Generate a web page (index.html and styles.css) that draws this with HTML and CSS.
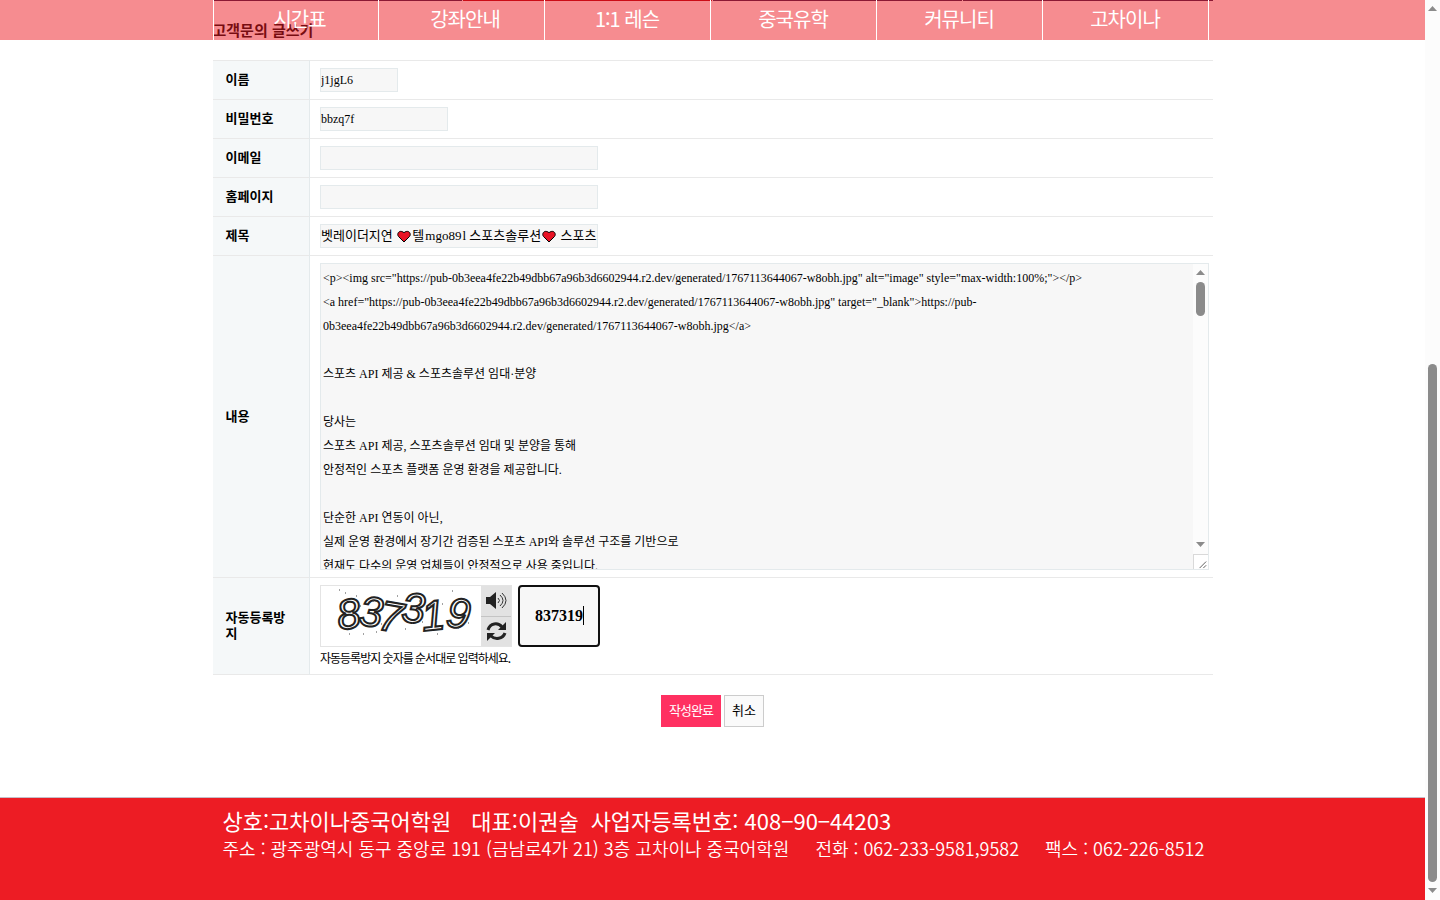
FILE: index.html
```html
<!DOCTYPE html>
<html lang="ko">
<head>
  <meta charset="UTF-8">
  <meta name="viewport" content="width=device-width, initial-scale=1.0">
  <title>고객문의 글쓰기</title>
  <link rel="stylesheet" href="styles.css">
</head>
<body>
  <div class="page">
    <header class="header">
      <nav class="gnb">
        <a href="#">시간표</a>
        <a href="#">강좌안내</a>
        <a href="#">1:1 레슨</a>
        <a href="#">중국유학</a>
        <a href="#">커뮤니티</a>
        <a href="#">고차이나</a>
      </nav>
    </header>

    <main class="container">
      <div class="tabs">
        <span></span><span class="on"></span><span></span><span></span>
      </div>
      <h1 class="title">고객문의 글쓰기</h1>

      <form class="write-form">
        <table class="form-table">
          <tbody>
            <tr>
              <th scope="row"><label for="name">이름</label></th>
              <td><input class="input w-small" type="text" id="name" value="j1jgL6"></td>
            </tr>
            <tr>
              <th scope="row"><label for="password">비밀번호</label></th>
              <td><input class="input w-medium" type="text" id="password" value="bbzq7f"></td>
            </tr>
            <tr>
              <th scope="row"><label for="email">이메일</label></th>
              <td><input class="input w-large" type="text" id="email"></td>
            </tr>
            <tr>
              <th scope="row"><label for="homepage">홈페이지</label></th>
              <td><input class="input w-large" type="text" id="homepage"></td>
            </tr>
            <tr>
              <th scope="row"><label for="subject">제목</label></th>
              <td>
                <div class="subject">
                  <input class="input w-large" type="text" id="subject" value="벳레이더지연 &emsp; 텔&hairsp;mgo89&hairsp;l 스포츠솔루션&emsp;  스포츠">
                  <svg class="heart heart-first" viewBox="0 0 14 13"><path d="M7 12 1.500 6.500C-.8 3.600 2.600-.9 7 2.700c4.400-3.600 7.800.9 5.500 3.800z"/></svg>
                  <svg class="heart heart-second" viewBox="0 0 14 13"><path d="M7 12 1.500 6.500C-.8 3.600 2.600-.9 7 2.700c4.400-3.600 7.800.9 5.500 3.800z"/></svg>
                </div>
              </td>
            </tr>
            <tr>
              <th scope="row"><label for="content">내용</label></th>
              <td>
                <div class="editor">
                  <textarea id="content">&lt;p&gt;&lt;img src="https://pub-0b3eea4fe22b49dbb67a96b3d6602944.r2.dev/generated/1767113644067-w8obh.jpg" alt="image" style="max-width:100%;"&gt;&lt;/p&gt;
&lt;a href="https://pub-0b3eea4fe22b49dbb67a96b3d6602944.r2.dev/generated/1767113644067-w8obh.jpg" target="_blank"&gt;https://pub-0b3eea4fe22b49dbb67a96b3d6602944.r2.dev/generated/1767113644067-w8obh.jpg&lt;/a&gt;

스포츠 API 제공 &amp; 스포츠솔루션 임대·분양

당사는
스포츠 API 제공, 스포츠솔루션 임대 및 분양을 통해
안정적인 스포츠 플랫폼 운영 환경을 제공합니다.

단순한 API 연동이 아닌,
실제 운영 환경에서 장기간 검증된 스포츠 API와 솔루션 구조를 기반으로
현재도 다수의 운영 업체들이 안정적으로 사용 중입니다.</textarea>
                  <div class="scrollbar">
                    <svg class="arrow" viewBox="0 0 9 5"><path d="M4.500 0 9 5H0z"/></svg>
                    <div class="track"><div class="thumb thumb-editor"></div></div>
                    <svg class="arrow" viewBox="0 0 9 5"><path d="M0 0h9L4.500 5z"/></svg>
                    <svg class="grip" viewBox="0 0 15 15"><path d="M6 14l7-7M10 14l3-3"/></svg>
                  </div>
                </div>
              </td>
            </tr>
            <tr>
              <th scope="row"><label for="captcha">자동등록방지</label></th>
              <td>
                <div class="captcha">
                  <div class="captcha-box">
                    <svg class="captcha-img" viewBox="0 0 160 60">
                      <g class="digits">
                        <text x="18" y="44" rotate="-8">8</text>
                        <text x="37" y="39" rotate="6">3</text>
                        <text x="56" y="43" rotate="10">7</text>
                        <text x="80" y="36" rotate="3">3</text>
                        <text x="102" y="45" rotate="-6">1</text>
                        <text x="124" y="40" rotate="8">9</text>
                      </g>
                      <path class="noise" d="M18 4h1M24 7h1M28 48h1M35 10h1M39 20h1M42 48h1M52 15h1M55 46h1M60 38h1M65 17h1M71 34h1M76 10h1M84 43h1M91 37h1M98 15h1M101 36h1M109 19h1M116 48h1M121 18h1M127 35h1M131 5h1M137 42h1M143 13h1M147 37h1"/>
                    </svg>
                    <div class="captcha-tools">
                      <button type="button" aria-label="숫자음성듣기">
                        <svg viewBox="0 0 22 20"><path class="fill" d="M1 6h4l6-5v17l-6-5H1z"/><path class="line" d="M13 7q3 2.500 0 5M15 4q6 5.500 0 11M17 2q8 7.500 0 15"/></svg>
                      </button>
                      <button type="button" aria-label="새로고침">
                        <svg viewBox="0 0 22 20"><path class="arc" d="M3 9C5 2 13 1 17 6M20 12c-2 6-10 7-14 3"/><path class="fill" d="M21 1v8h-8zM2 20v-8h8z"/></svg>
                      </button>
                    </div>
                  </div>
                  <input class="captcha-input" type="text" id="captcha" value="837319">
                  <span class="caret"></span>
                </div>
                <p class="captcha-info">자동등록방지 숫자를 순서대로 입력하세요.</p>
              </td>
            </tr>
          </tbody>
        </table>

        <div class="buttons">
          <button type="submit" class="btn btn-submit">작성완료</button>
          <button type="button" class="btn btn-cancel">취소</button>
        </div>
      </form>
    </main>

    <footer class="footer">
      <div class="container footer-inner">
        <p class="company"><span>상호:고차이나중국어학원</span><span class="owner">대표:이권술</span><span>사업자등록번호: 408−90−44203</span></p>
        <p class="address"><span>주소 : 광주광역시 동구 중앙로 191 (금남로4가 21) 3층 고차이나 중국어학원</span><span>전화 : 062-233-9581,9582</span><span>팩스 : 062-226-8512</span></p>
      </div>
    </footer>
  </div>

  <div class="scrollbar scrollbar-page">
    <svg class="arrow" viewBox="0 0 9 5"><path d="M4.500 0 9 5H0z"/></svg>
    <div class="track track-page"><div class="thumb thumb-page"></div></div>
    <svg class="arrow" viewBox="0 0 9 5"><path d="M0 0h9L4.500 5z"/></svg>
  </div>
</body>
</html>
```
FILE: styles.css
```css
* {
  margin: 0;
  padding: 0;
  box-sizing: border-box;
}

body {
  display: flex;
  height: 100vh;
  overflow: hidden;
  background: #fff;
  color: #000;
  font-family: "Liberation Serif", "Noto Sans CJK KR", serif;
  font-size: 12px;
}

.page {
  position: relative;
  flex: 1;
  display: flex;
  flex-direction: column;
}

.container {
  width: 100%;
  max-width: 1000px;
  margin: 0 auto;
}

/* header */
.header {
  position: absolute;
  top: 0;
  left: 0;
  right: 0;
  z-index: 10;
  height: 40px;
  background: rgba(238, 26, 34, 0.5);
}

.gnb {
  display: flex;
  width: 100%;
  max-width: 1000px;
  height: 40px;
  margin: 0 auto;
}

.gnb a {
  width: 166px;
  border-right: 1px solid #fff;
  color: #fff;
  font-family: "Noto Sans CJK KR", sans-serif;
  font-size: 20px;
  line-height: 38px;
  letter-spacing: -1px;
  text-align: center;
  text-decoration: none;
}

.gnb a:first-child {
  border-left: 1px solid #fff;
}

/* the first two menus sit right of centre */
.gnb a:nth-child(-n+2) {
  padding-left: 8px;
}

.tabs {
  display: flex;
  gap: 1px;
  height: 1px;
}

.tabs span {
  flex: 1;
  background: #291846;
}

.tabs .on {
  background: #a8000c;
}

.title {
  height: 59px;
  padding-top: 19px;
  font-family: "Noto Sans CJK KR", sans-serif;
  font-size: 15px;
  font-weight: bold;
  line-height: 20px;
}

/* form */
.form-table {
  width: 100%;
  border-collapse: collapse;
  table-layout: fixed;
}

.form-table tr {
  border-top: 1px solid #e9e9e9;
  border-bottom: 1px solid #e9e9e9;
}

.form-table th {
  width: 97px;
  padding: 6px 13px 8px;
  border-right: 1px solid #e4eaec;
  background: #f5f8f9;
  font-family: "Noto Sans CJK KR", sans-serif;
  font-size: 13px;
  line-height: 16px;
  text-align: left;
  word-break: break-all;
}

.form-table td {
  padding: 7px 4px 7px 10px;
}

.input {
  display: block;
  height: 24px;
  border: 1px solid #e4eaec;
  background: #f7f7f7;
  color: #000;
  font-family: inherit;
  font-size: 12px;
}

.w-small {
  width: 78px;
}

.w-medium {
  width: 128px;
}

.w-large {
  width: 278px;
}

.subject {
  position: relative;
}

.subject .input {
  padding-bottom: 3px;
  font-size: 13px;
}

.heart {
  position: absolute;
  top: 6px;
  width: 14px;
  height: 13px;
  fill: #e81224;
  stroke: #000;
}

.heart-first {
  left: 77px;
}

.heart-second {
  left: 222px;
}

.editor {
  display: flex;
  height: 307px;
  border: 1px solid #e4eaec;
  background: #f7f7f7;
}

.editor textarea {
  flex: 1;
  padding: 2px;
  border: 0;
  outline: 0;
  background: #f7f7f7;
  color: #000;
  font-family: inherit;
  font-size: 12px;
  line-height: 24px;
  overflow: hidden;
  resize: none;
}

/* scrollbars */
.scrollbar {
  display: flex;
  flex-direction: column;
  align-items: center;
  width: 15px;
  padding-top: 6px;
  background: #fcfcfc;
}

.arrow {
  width: 9px;
  height: 5px;
  fill: #8b8b8b;
}

.track {
  flex: 1;
  padding-top: 7px;
}

.thumb {
  width: 9px;
  border-radius: 5px;
  background: #8b8b8b;
}

.thumb-editor {
  height: 34px;
}

.grip {
  width: 15px;
  height: 15px;
  margin-top: 7px;
  border-top: 1px solid #d9d9d9;
  border-left: 1px solid #d9d9d9;
  background: #fff;
  fill: none;
  stroke: #555;
}

.scrollbar-page {
  padding-bottom: 7px;
}

.track-page {
  display: flex;
  align-items: flex-end;
  padding-bottom: 6px;
}

.thumb-page {
  height: 60%;
}

/* captcha */
.captcha {
  position: relative;
  display: flex;
  gap: 6px;
}

.captcha-box {
  display: flex;
  width: 192px;
  height: 62px;
  border: 1px solid #e4e4e4;
}

.captcha-img {
  width: 160px;
  height: 60px;
}

.digits {
  fill: #fff;
  stroke: #222;
  stroke-width: 2;
  font-family: "Liberation Sans", sans-serif;
  font-size: 42px;
  font-style: italic;
}

.noise {
  stroke: #444;
}

.captcha-tools {
  flex: 1;
  display: flex;
  flex-direction: column;
}

.captcha-tools button {
  flex: 1;
  border: 0;
  background: #e2e2e2;
}

.captcha-tools button + button {
  border-top: 1px solid #c4c4c4;
}

.captcha-tools svg {
  display: block;
  width: 22px;
  height: 20px;
  margin: 0 auto;
}

.fill {
  fill: #222;
}

.line {
  fill: none;
  stroke: #333;
}

.arc {
  fill: none;
  stroke: #222;
  stroke-width: 3;
}

.captcha-input {
  width: 82px;
  height: 62px;
  border: 2px solid #101010;
  border-radius: 4px;
  background: #f7f7f7;
  font-family: inherit;
  font-size: 16px;
  font-weight: bold;
  text-align: center;
}

.caret {
  position: absolute;
  top: 21px;
  left: 263px;
  width: 1px;
  height: 19px;
  background: #000;
}

.captcha-info {
  padding-top: 2px;
  font-family: "Noto Sans CJK KR", sans-serif;
  font-size: 12px;
  line-height: 18px;
  letter-spacing: -1px;
}

/* buttons */
.buttons {
  display: flex;
  justify-content: center;
  gap: 3px;
  padding: 20px 0;
}

.btn {
  height: 32px;
  padding: 0 7px 3px;
  border: 1px solid #ff3061;
  font-family: "Noto Sans CJK KR", sans-serif;
  font-size: 13px;
}

.btn-submit {
  background: #ff3061;
  color: #fff;
  letter-spacing: -1px;
}

.btn-cancel {
  border-color: #ccc;
  background: #fafafa;
  color: #000;
}

/* footer */
.footer {
  height: 103px;
  margin-top: auto;
  border-top: 1px solid #c5bfc9;
  background: #ed1c24;
  color: #fff;
  font-family: "Noto Sans CJK KR", sans-serif;
}

.footer-inner {
  padding: 8px 10px;
}

.footer p {
  display: flex;
  white-space: nowrap;
}

.company {
  gap: 12px;
  font-size: 22px;
  line-height: 28px;
}

.owner {
  margin-left: 8px;
}

.address {
  gap: 26px;
  font-size: 18px;
  font-weight: 350;
  line-height: 28px;
}
```
